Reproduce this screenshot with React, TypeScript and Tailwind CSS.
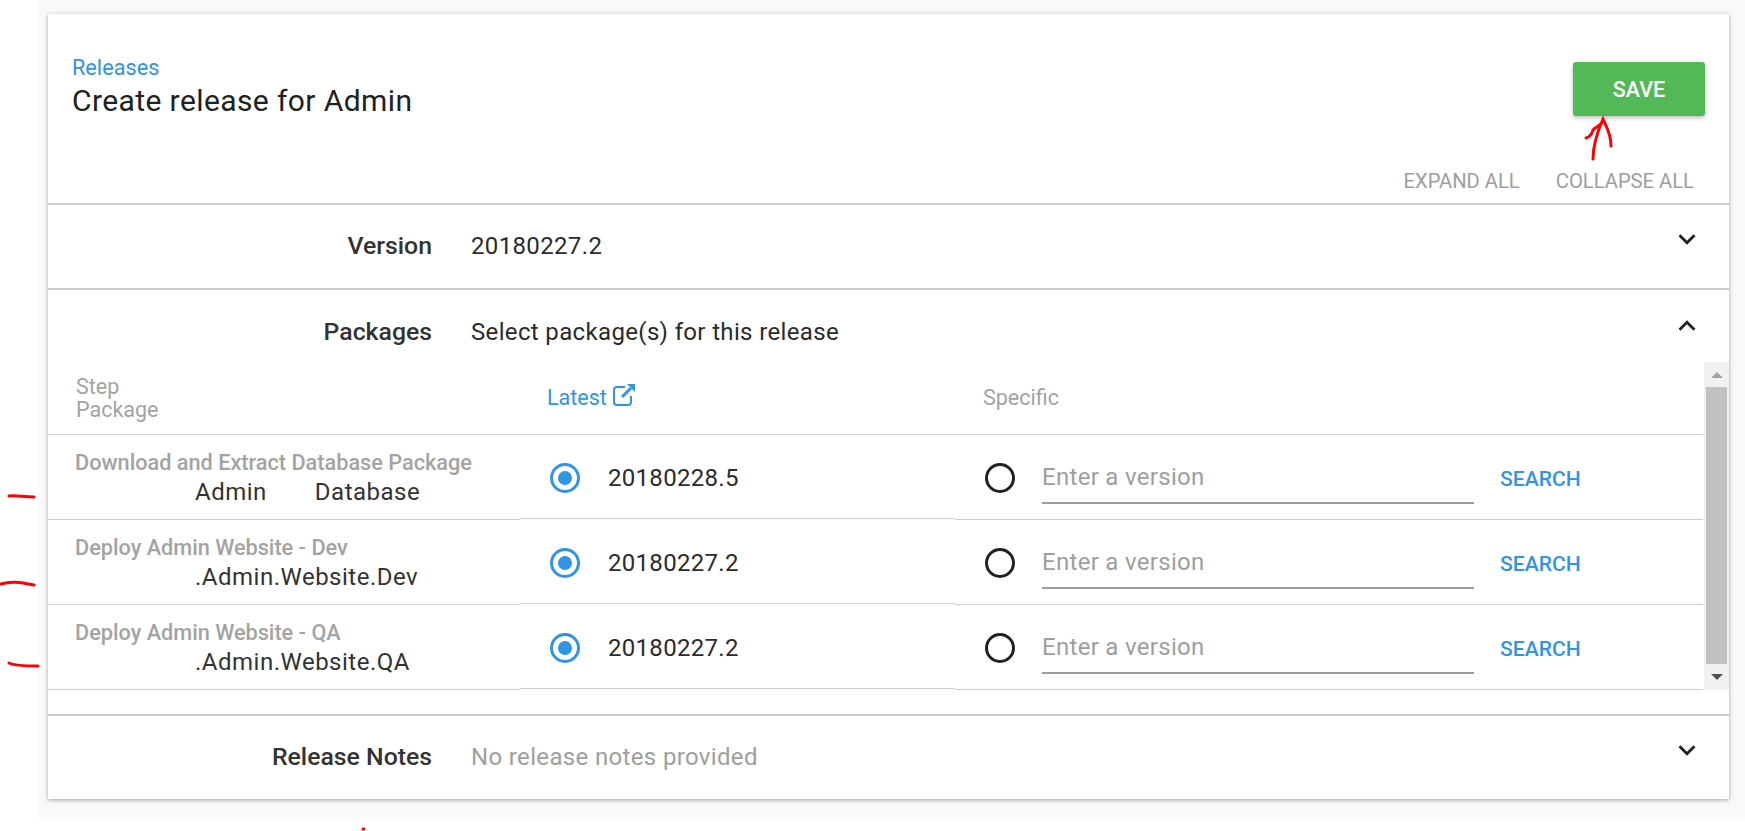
import React from 'react';

const FONT = "font-['Roboto',sans-serif]";

const Chevron: React.FC<{ up?: boolean }> = ({ up }) => (
  <svg viewBox="0 0 24 24" className={`w-[34px] h-[34px] fill-[#212121] ${up ? 'rotate-180' : ''}`}>
    <path d="M16.59 8.59L12 13.17 7.41 8.59 6 10l6 6 6-6z" />
  </svg>
);

const Radio: React.FC<{ checked?: boolean }> = ({ checked }) => (
  <div className={`w-[30px] h-[30px] rounded-full border-[3px] flex items-center justify-center shrink-0 ${checked ? 'border-[#3095e3]' : 'border-[#212121]'}`}>
    {checked && <div className="w-[14px] h-[14px] rounded-full bg-[#3095e3]" />}
  </div>
);

const SectionRow: React.FC<{ label: string; value: string; muted?: boolean; up?: boolean; className?: string; labelTop?: string; valueTop?: string }> = ({
  label,
  value,
  muted,
  up,
  className,
  labelTop = 'mt-[12px]',
  valueTop = 'mt-[12px]',
}) => (
  <div className={`flex items-start ${className}`}>
    <div className={`w-[384px] text-right text-[24.8px] font-medium text-[#333] leading-[24px] ${labelTop}`}>{label}</div>
    <div className={`ml-[39px] text-[24px] tracking-[0.35px] leading-[24px] ${valueTop} ${muted ? 'text-[#9e9e9e]' : 'text-[#2b2b2b]'}`}>{value}</div>
    <div className="ml-auto mr-[25px]"><Chevron up={up} /></div>
  </div>
);

const rows = [
  { step: 'Download and Extract Database Package', pkg: 'Admin', pkgEnd: 'Database', version: '20180228.5' },
  { step: 'Deploy Admin Website - Dev', pkg: '.Admin.Website.Dev', version: '20180227.2' },
  { step: 'Deploy Admin Website - QA', pkg: '.Admin.Website.QA', version: '20180227.2' },
];

const PackageRow: React.FC<(typeof rows)[number]> = ({ step, pkg, pkgEnd, version }) => (
  <div className="flex h-[85px]">
    <div className="w-[472px] h-[85px] border-b border-[#ccc] pl-[27px] pt-[14px]">
      <div className="text-[21.7px] font-medium leading-[28px] text-[#a3a3a3]">{step}</div>
      <div className="flex text-[24px] tracking-[0.5px] leading-[31px] text-[#333] pl-[120px]">
        <span>{pkg}</span>
        {pkgEnd && <span className="ml-[48px]">{pkgEnd}</span>}
      </div>
    </div>
    <div className="w-[435px] h-[84px] border-b border-[#ccc] flex items-center pl-[30px] pt-[2px]">
      <Radio checked />
      <span className="ml-[28px] text-[24px] tracking-[0.3px] text-[#2b2b2b]">{version}</span>
    </div>
    <div className="flex-1 h-[85px] border-b border-[#ccc] flex items-center pl-[30px] pt-[1px]">
      <Radio />
      <div className="ml-[27px] w-[432px] h-[52px] border-b-2 border-[#9e9e9e] text-[24px] tracking-[0.3px] text-[#9e9e9e] leading-[50px]">Enter a version</div>
      <span className="ml-[26px] mt-[2px] text-[21.1px] font-medium text-[#3095e3]">SEARCH</span>
    </div>
  </div>
);

export default function App() {
  return (
    <div className={`relative w-[1745px] h-[831px] overflow-hidden bg-white ${FONT}`}>
      <div className="ml-[39px] h-[819px] bg-[#f9f9f9] pt-[14px] pl-[9px] pr-[16px]">
        <div className="bg-white shadow-[0_1px_4px_rgba(0,0,0,0.35)] h-[785px] flex flex-col">
          <div className="h-[191px] border-b-2 border-[#ccc] flex justify-between pl-[24px] pr-[24px] shrink-0">
            <div className="pt-[42px]">
              <div className="text-[21.7px] leading-[24px] text-[#3095e3]">Releases</div>
              <div className="text-[30px] tracking-[0.4px] leading-[42px] text-[#212121]">Create release for Admin</div>
            </div>
            <div className="flex flex-col items-end pt-[48px]">
              <button className="w-[132px] h-[54px] pt-[2px] rounded-[3px] bg-[#53b957] text-white text-[21.5px] font-medium shadow-[0_2px_4px_rgba(0,0,0,0.25)]">SAVE</button>
              <div className="flex mt-[50px] mr-[11px] gap-[36px] text-[20.2px] leading-[30px] text-[#9e9e9e]">
                <span>EXPAND ALL</span>
                <span>COLLAPSE ALL</span>
              </div>
            </div>
          </div>
          <SectionRow label="Version" value="20180227.2" className="h-[85px] pt-[17px] border-b-2 border-[#ccc] shrink-0" />
          <SectionRow label="Packages" value="Select package(s) for this release" up labelTop="mt-[11px]" valueTop="mt-[11px]" className="h-[72px] pt-[19px] shrink-0" />
          <div className="flex h-[328px] shrink-0">
            <div className="flex-1">
              <div className="flex h-[73px] border-b border-[#ccc] text-[21.5px] leading-[23px] text-[#a3a3a3]">
                <div className="w-[472px] pl-[28px] pt-[13px]">
                  <div>Step</div>
                  <div>Package</div>
                </div>
                <div className="w-[435px] pl-[27px] pt-[24px] flex items-start text-[#3095e3]">
                  Latest
                  <svg viewBox="0 0 24 24" className="w-[24px] h-[24px] ml-[5px] mt-[-3px]" fill="none" stroke="#3095e3" strokeWidth="2">
                    <path d="M13 4H5a3 3 0 0 0-3 3v12a3 3 0 0 0 3 3h11a3 3 0 0 0 3-3v-6" />
                    <path d="M10 14l9-9" strokeWidth="3" />
                    <path d="M15 1h8v8z" fill="#3095e3" stroke="none" />
                  </svg>
                </div>
                <div className="pl-[28px] pt-[24px]">Specific</div>
              </div>
              {rows.map((row) => <PackageRow key={row.version + row.step} {...row} />)}
            </div>
            <div className="w-[25px] ml-[1px] bg-[#f1f1f1] flex flex-col items-center">
              <div className="h-[25px] flex items-center justify-center">
                <div className="w-0 h-0 border-x-[6px] border-x-transparent border-b-[6px] border-b-[#a3a3a3]" />
              </div>
              <div className="w-[21px] flex-1 bg-[#c1c1c1]" />
              <div className="h-[26px] flex items-center justify-center">
                <div className="w-0 h-0 border-x-[6px] border-x-transparent border-t-[6px] border-t-[#505050]" />
              </div>
            </div>
          </div>
          <div className="mt-[24px] border-t-2 border-[#ccc]">
            <SectionRow label="Release Notes" value="No release notes provided" muted className="h-[83px] pt-[17px]" />
          </div>
        </div>
      </div>
      <svg className="absolute left-0 top-0 pointer-events-none" width="1745" height="831" fill="none" stroke="#ff0000" strokeWidth="3" strokeLinecap="round">
        <path d="M1593 159c0-10 3-24 10-40 3 7 8 14 8 27M1603 121c-3 6-7 5-10 9-1 4-3 7-7 8" />
        <path d="M9 496c8-1 14 1 25 1" />
        <path d="M1 584c10-3 18-2 33 1" />
        <path d="M9 663c6 3 18 3 29 3" />
        <path d="M363 829h1" />
      </svg>
    </div>
  );
}
